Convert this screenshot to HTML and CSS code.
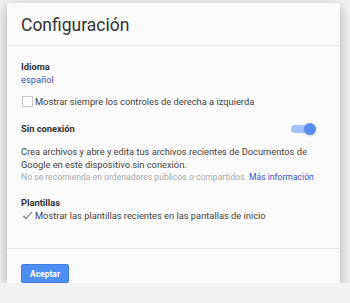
FILE: index.html
```html
<!DOCTYPE html>
<html lang="es">
<head>
  <meta charset="UTF-8" />
  <title>Configuración</title>
  <link rel="stylesheet" href="styles.css">
</head>
<body>
  <div class="dialog">
    <div class="dialog-title">Configuración</div>
    <div class="dialog-body">
      <div class="section">
        <div class="label">Idioma</div>
        <a class="link">español</a>
        <div class="check-row">
          <span class="checkbox"></span>
          <span>Mostrar siempre los controles de derecha a izquierda</span>
        </div>
      </div>

      <div class="section offline">
        <div class="row-between">
          <div class="label">Sin conexión</div>
          <span class="toggle"><span class="knob"></span></span>
        </div>
        <p class="desc">Crea archivos y abre y edita tus archivos recientes de Documentos de Google en este dispositivo sin conexión.</p>
        <p class="note">No se recomienda en ordenadores públicos o compartidos. <a class="link">Más información</a></p>
      </div>

      <div class="section">
        <div class="label">Plantillas</div>
        <div class="check-row">
          <span class="checkbox checked">
            <svg width="11" height="10" viewBox="0 0 11 10"><path d="M1.5 6 L4 8.5 L10 2" fill="none" stroke="#666" stroke-width="1.1"/></svg>
          </span>
          <span>Mostrar las plantillas recientes en las pantallas de inicio</span>
        </div>
      </div>
    </div>
    <div class="dialog-footer">
      <button>Aceptar</button>
    </div>
  </div>
</body>
</html>
```

FILE: styles.css
```css
body {
  margin: 0;
  background: #f2f2f2;
  font-family: Roboto, "Liberation Sans", sans-serif;
  color: #444;
  font-size: 9.3px;
}
.dialog {
  margin: 3px 0 0 7px;
  width: 333px;
  height: 280px;
  background: #fafafa;
  box-shadow: 0 4px 12px rgba(0,0,0,0.3);
  display: flex;
  flex-direction: column;
}
.dialog-title {
  height: 42px;
  line-height: 45px;
  padding-left: 14px;
  font-size: 17.5px;
  color: #333;
  border-bottom: 1px solid #e8e8e8;
}
.dialog-body {
  height: 188px;
  padding: 14px 19px 0 14px;
  border-bottom: 1px solid #e8e8e8;
}
.section {
  margin-bottom: 14px;
}
.section.offline {
  margin-bottom: 12px;
}
.label {
  font-weight: bold;
  color: #333;
  line-height: 13px;
}
.link {
  color: #3b52c4;
  line-height: 13px;
}
.section > .link {
  display: block;
}
.check-row {
  display: flex;
  align-items: center;
  margin-top: 9px;
  line-height: 13px;
}
.section .label + .check-row {
  margin-top: 0;
}
.checkbox {
  width: 9px;
  height: 9px;
  border: 1px solid #c6c6c6;
  background: #fff;
  margin: 0 2px 0 1px;
  position: relative;
}
.checkbox.checked {
  border-color: transparent;
  background: transparent;
}
.checkbox svg {
  position: absolute;
  left: -1px;
  top: -1px;
}
.row-between {
  display: flex;
  justify-content: space-between;
  align-items: center;
}
.toggle {
  width: 20px;
  height: 8px;
  border-radius: 4px;
  background: #a5bff7;
  position: relative;
  margin-right: 10px;
}
.knob {
  position: absolute;
  right: -5px;
  top: -2px;
  width: 12px;
  height: 12px;
  border-radius: 50%;
  background: #5a8df0;
  box-shadow: 0 1px 2px rgba(0,0,0,0.2);
}
.desc {
  margin: 10px 0 0;
  line-height: 13px;
}
.note {
  margin: 0;
  font-size: 8.6px;
  color: #aaa;
  line-height: 13px;
}
.dialog-footer {
  flex: 1;
  padding: 15px 0 0 14px;
}
button {
  width: 48px;
  height: 19px;
  padding: 0;
  background: #4d8ff3;
  border: 1px solid #3f7ce6;
  border-radius: 2px;
  color: #fff;
  font-family: Roboto, "Liberation Sans", sans-serif;
  font-size: 8.5px;
  font-weight: bold;
}
```
